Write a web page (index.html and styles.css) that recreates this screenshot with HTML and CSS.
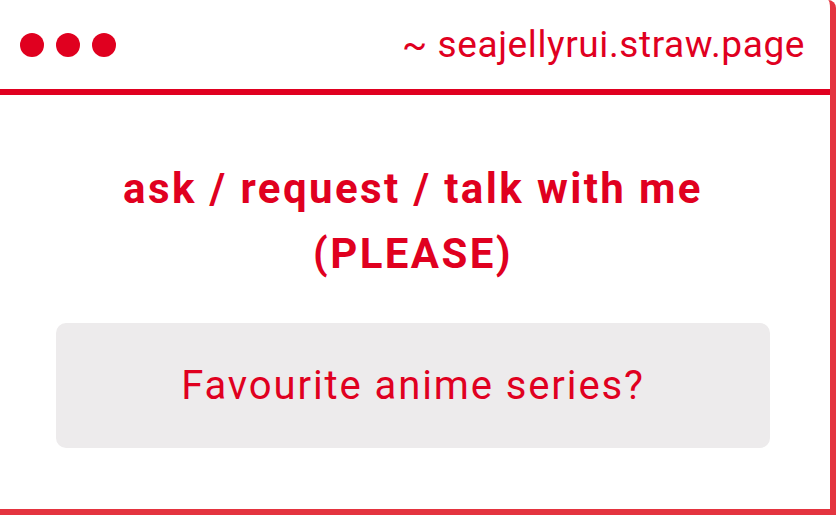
FILE: index.html
```html
<!DOCTYPE html>
<html>
<head>
<meta charset="utf-8">
<link rel="stylesheet" href="styles.css">
</head>
<body>
<div class="window">
  <header class="bar">
    <div class="dots"><span class="dot"></span><span class="dot"></span><span class="dot"></span></div>
    <div class="url">~ seajellyrui.straw.page</div>
  </header>
  <main class="content">
    <h1 class="title">ask / request / talk with me<br>(PLEASE)</h1>
    <div class="question">Favourite anime series?</div>
  </main>
</div>
</body>
</html>
```
FILE: styles.css
```css
html, body {
  margin: 0;
  padding: 0;
  background: #ffffff;
}
body {
  width: 836px;
  height: 518px;
  overflow: hidden;
  font-family: Roboto, "Liberation Sans", sans-serif;
  color: #e0001f;
}
.window {
  box-sizing: border-box;
  width: 836px;
  height: 515px;
  border-right: 6px solid #e4343f;
  border-bottom: 6px solid #e4343f;
  border-top-right-radius: 8px;
}
.bar {
  box-sizing: border-box;
  height: 95px;
  border-bottom: 6px solid #e00020;
  display: flex;
  align-items: center;
  justify-content: space-between;
  padding: 0 25px 0 20px;
}
.dots {
  display: flex;
  gap: 12px;
}
.dot {
  width: 24px;
  height: 24px;
  border-radius: 50%;
  background: #e0001f;
}
.url {
  font-size: 37px;
  line-height: 40px;
  letter-spacing: 0.6px;
}
.content {
  display: flex;
  flex-direction: column;
  padding: 61px 4px 0 0;
}
.title {
  margin: 0;
  font-size: 42px;
  font-weight: 700;
  line-height: 65px;
  letter-spacing: 2.4px;
  text-align: center;
}
.question {
  margin: 37px 0 0 56px;
  width: 714px;
  height: 125px;
  border-radius: 10px;
  background: #edebec;
  display: flex;
  align-items: center;
  justify-content: center;
  font-size: 40px;
  letter-spacing: 1.9px;
}
```
